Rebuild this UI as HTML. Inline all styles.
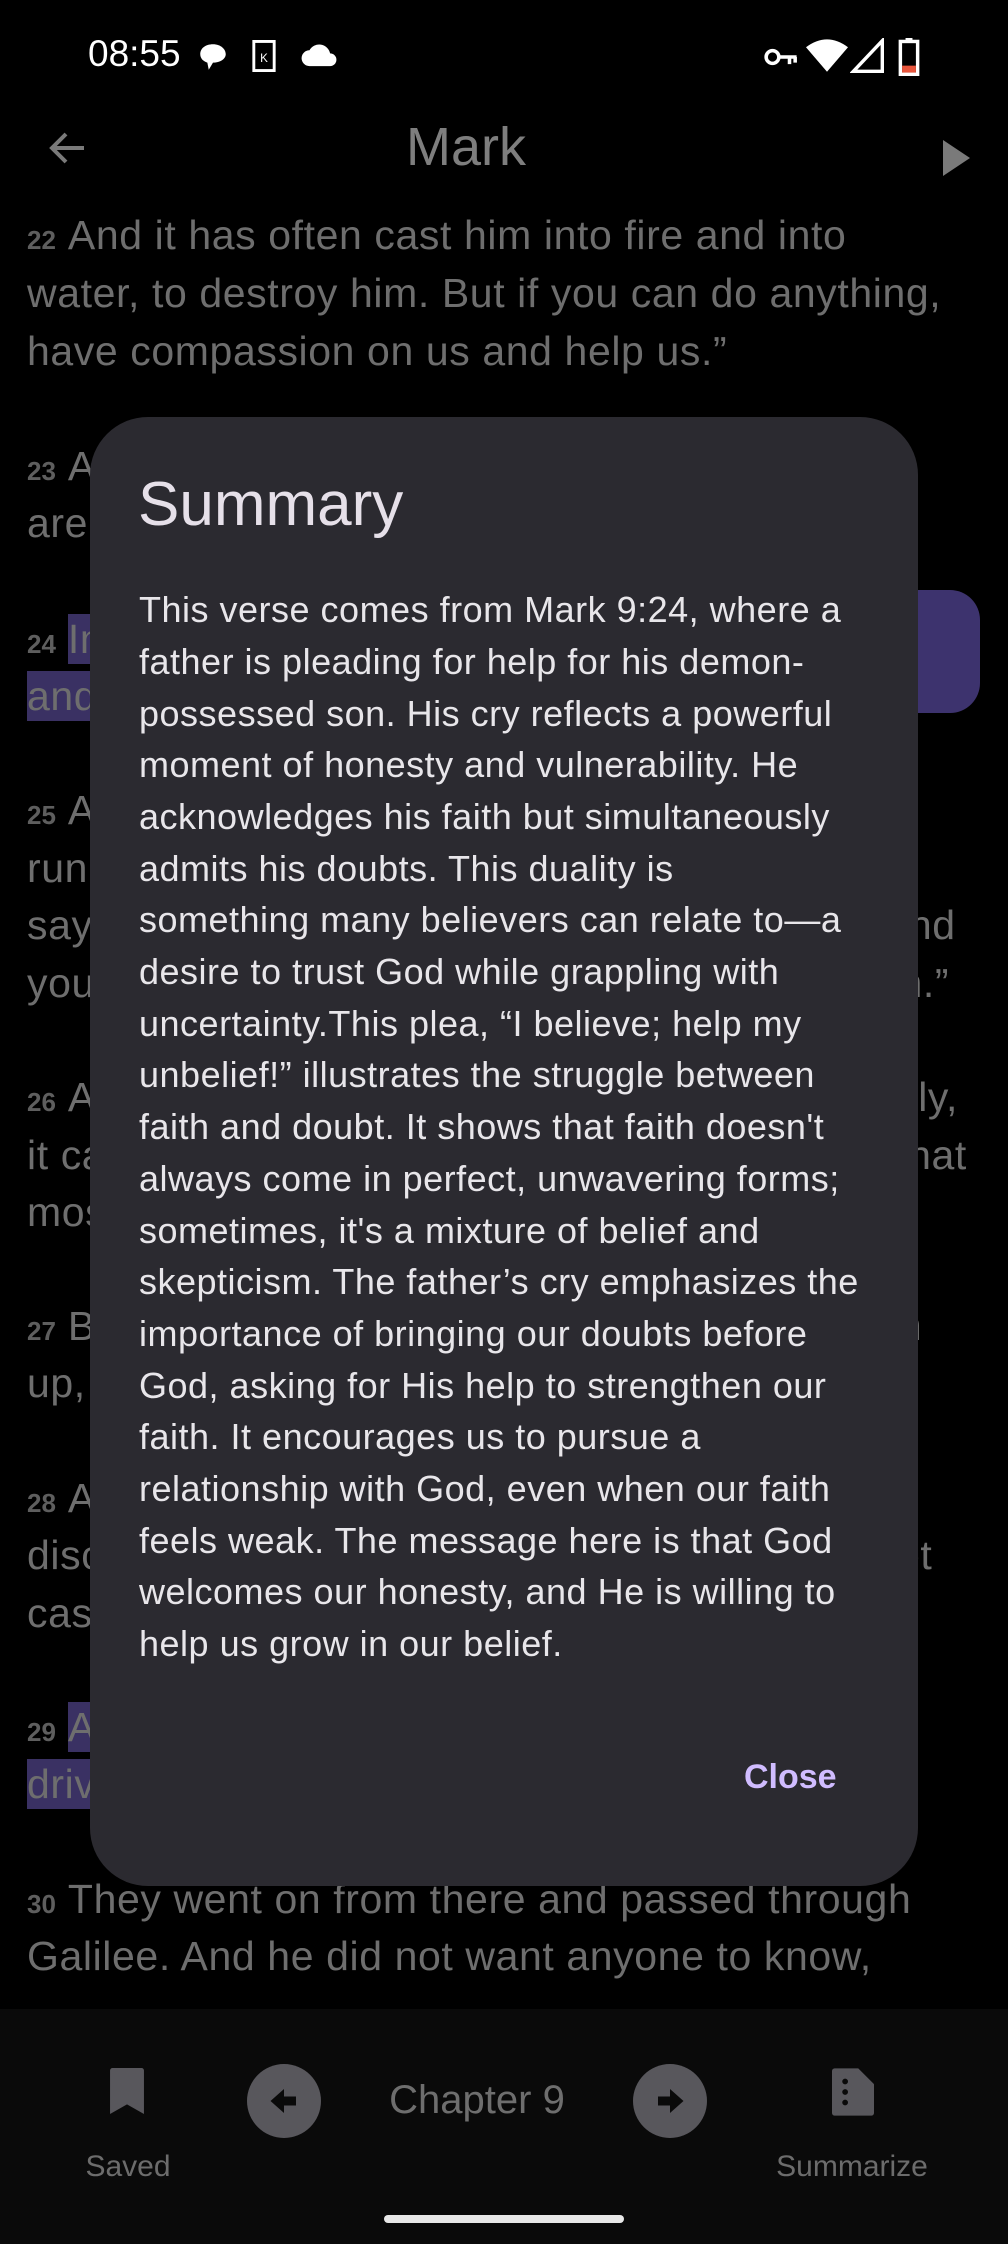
<!DOCTYPE html>
<html><head><meta charset="utf-8"><style>
*{margin:0;padding:0;box-sizing:border-box}
body{width:1008px;height:2244px;background:#000;position:relative;overflow:hidden;font-family:"Liberation Sans",sans-serif}
.a{position:absolute;white-space:nowrap}
.v{position:absolute;left:27px;height:58px;line-height:58px;font-size:41px;letter-spacing:0.6px;color:#6e6e6e;white-space:nowrap}
.n{font-size:26px;font-weight:bold;color:#5e5e5e;margin-right:12px;letter-spacing:0}
.hl{background:#3a3163;padding:2px 0}
.b{position:absolute;left:139px;height:52px;line-height:52px;font-size:36px;letter-spacing:0.5px;color:#e8e6ea;white-space:nowrap}
</style></head><body>
<!-- status bar -->
<div class="a" style="left:88px;top:33px;font-size:37px;color:#fff">08:55</div>
<svg class="a" style="left:196px;top:40px" width="34" height="34" viewBox="0 0 24 24"><path d="M12 3C6.5 3 3 6 3 10c0 3 2 5 5 6l1 5 3-5c5 0 9-2.5 9-6S17.5 3 12 3z" fill="#fff"/></svg>
<svg class="a" style="left:252px;top:40px" width="24" height="32" viewBox="0 0 16 22"><rect x="1" y="1" width="14" height="20" fill="none" stroke="#fff" stroke-width="2"/><text x="8" y="15" font-size="8" fill="#fff" text-anchor="middle" font-family="Liberation Sans">K</text></svg>
<svg class="a" style="left:300px;top:42px" width="38" height="26" viewBox="0 0 24 16"><path d="M6 15a5 5 0 0 1 0-10 7 7 0 0 1 13 2 4 4 0 0 1 0 8z" fill="#fff"/></svg>
<svg class="a" style="left:764px;top:46px" width="34" height="22" viewBox="0 0 24 14"><circle cx="6" cy="7" r="4.5" fill="none" stroke="#fff" stroke-width="2.5"/><path d="M10 7h13M18 7v5M22 7v4" stroke="#fff" stroke-width="2.5"/></svg>
<svg class="a" style="left:806px;top:38px" width="42" height="36" viewBox="0 0 24 20"><path d="M12 19L0 5Q12-4 24 5z" fill="#fff"/></svg>
<svg class="a" style="left:850px;top:38px" width="34" height="36" viewBox="0 0 20 20"><path d="M2 19L19 1v18z" fill="none" stroke="#fff" stroke-width="2"/></svg>
<svg class="a" style="left:898px;top:38px" width="22" height="38" viewBox="0 0 12 22"><rect x="4" y="0" width="4" height="2" fill="#fff"/><rect x="1" y="2" width="10" height="19" fill="none" stroke="#fff" stroke-width="2"/><rect x="2" y="16" width="8" height="4" fill="#e8553c"/></svg>
<!-- app bar -->
<svg class="a" style="left:44px;top:124px" width="48" height="48" viewBox="0 0 24 24"><path d="M20 12H4M11 5l-7 7 7 7" fill="none" stroke="#7a7a7a" stroke-width="2"/></svg>
<div class="a" style="left:0;width:932px;text-align:center;top:116px;font-size:54px;color:#7e7e7e">Mark</div>
<svg class="a" style="left:940px;top:140px" width="30" height="36" viewBox="0 0 10 12"><path d="M1 0l9 6-9 6z" fill="#7a7a7a"/></svg>
<!-- verses -->
<div class="v" style="top:206px"><span class="n">22</span>And it has often cast him into fire and into</div>
<div class="v" style="top:264px">water, to destroy him. But if you can do anything,</div>
<div class="v" style="top:322px">have compassion on us and help us.”</div>
<div class="v" style="top:437px"><span class="n">23</span>And Jesus said to him, “‘If you can’! All things</div>
<div class="v" style="top:494px">are possible for one who believes.”</div>
<div class="v" style="top:610px"><span class="n">24</span><span class="hl">Immediately the father of the child cried out</span></div>
<div class="v" style="top:667px"><span class="hl">and said, “I believe; help my unbelief!”</span></div>
<div class="a" style="left:880px;top:590px;width:100px;height:123px;border-radius:30px;background:#3d336e"></div>
<div class="v" style="top:781px"><span class="n">25</span>And when Jesus saw that a crowd came</div>
<div class="v" style="top:839px">running together, he rebuked the unclean spirit,</div>
<div class="v" style="top:896px">saying to it, “You mute and deaf spirit, I command</div>
<div class="v" style="top:954px">you, come out of him and never enter him again.”</div>
<div class="v" style="top:1068px"><span class="n">26</span>And after crying out and convulsing him terribly,</div>
<div class="v" style="top:1126px">it came out, and the boy was like a corpse, so that</div>
<div class="v" style="top:1183px">most of them said, “He is dead.”</div>
<div class="v" style="top:1297px"><span class="n">27</span>But Jesus took him by the hand and lifted him</div>
<div class="v" style="top:1354px">up, and he arose.</div>
<div class="v" style="top:1469px"><span class="n">28</span>And when he had entered the house, his</div>
<div class="v" style="top:1526px">disciples asked him privately, “Why could we not</div>
<div class="v" style="top:1584px">cast it out?”</div>
<div class="v" style="top:1698px"><span class="n">29</span><span class="hl">And he said to them, “This kind cannot be</span></div>
<div class="v" style="top:1755px"><span class="hl">driven out by anything but prayer.”</span></div>
<div class="v" style="top:1870px"><span class="n">30</span>They went on from there and passed through</div>
<div class="v" style="top:1927px">Galilee. And he did not want anyone to know,</div>
<!-- bottom bar -->
<div class="a" style="left:0;top:2009px;width:1008px;height:235px;background:#0a0a0a"></div>
<svg class="a" style="left:110px;top:2068px" width="34" height="46" viewBox="0 0 14 19"><path d="M0 1a1 1 0 0 1 1-1h12a1 1 0 0 1 1 1v18l-7-4-7 4z" fill="#58575c"/></svg>
<div class="a" style="left:0;width:256px;text-align:center;top:2150px;font-size:30px;color:#6c6c6c">Saved</div>
<div class="a" style="left:247px;top:2064px;width:74px;height:74px;border-radius:50%;background:#58575c"></div>
<svg class="a" style="left:266px;top:2083px" width="36" height="36" viewBox="0 0 24 24"><path d="M3 12l9-8v5h8v6h-8v5z" fill="#0a0a0a"/></svg>
<div class="a" style="left:340px;width:274px;text-align:center;top:2078px;font-size:40px;color:#6e6e6e">Chapter 9</div>
<div class="a" style="left:633px;top:2064px;width:74px;height:74px;border-radius:50%;background:#58575c"></div>
<svg class="a" style="left:652px;top:2083px" width="36" height="36" viewBox="0 0 24 24"><path d="M21 12l-9-8v5H4v6h8v5z" fill="#0a0a0a"/></svg>
<svg class="a" style="left:832px;top:2068px" width="42" height="48" viewBox="0 0 16 18"><path d="M1 0h9l6 6v11a1 1 0 0 1-1 1H1a1 1 0 0 1-1-1V1a1 1 0 0 1 1-1z" fill="#58575c"/><circle cx="5" cy="5" r="1.1" fill="#0a0a0a"/><circle cx="5" cy="9" r="1.1" fill="#0a0a0a"/><circle cx="5" cy="13" r="1.1" fill="#0a0a0a"/></svg>
<div class="a" style="left:752px;width:200px;text-align:center;top:2150px;font-size:30px;color:#6c6c6c">Summarize</div>
<div class="a" style="left:384px;top:2215px;width:240px;height:8px;border-radius:4px;background:#e8e8e8"></div>
<!-- dialog -->
<div class="a" style="left:90px;top:417px;width:828px;height:1469px;border-radius:58px;background:#2b2a30"></div>
<div class="a" style="left:138px;top:469px;font-size:62px;color:#e6e0e9">Summary</div>
<div class="b" style="top:584px">This verse comes from Mark 9:24, where a</div>
<div class="b" style="top:636px">father is pleading for help for his demon-</div>
<div class="b" style="top:688px">possessed son. His cry reflects a powerful</div>
<div class="b" style="top:739px">moment of honesty and vulnerability. He</div>
<div class="b" style="top:791px">acknowledges his faith but simultaneously</div>
<div class="b" style="top:843px">admits his doubts. This duality is</div>
<div class="b" style="top:894px">something many believers can relate to—a</div>
<div class="b" style="top:946px">desire to trust God while grappling with</div>
<div class="b" style="top:998px">uncertainty.This plea, “I believe; help my</div>
<div class="b" style="top:1049px">unbelief!” illustrates the struggle between</div>
<div class="b" style="top:1101px">faith and doubt. It shows that faith doesn't</div>
<div class="b" style="top:1153px">always come in perfect, unwavering forms;</div>
<div class="b" style="top:1205px">sometimes, it's a mixture of belief and</div>
<div class="b" style="top:1256px">skepticism. The father’s cry emphasizes the</div>
<div class="b" style="top:1308px">importance of bringing our doubts before</div>
<div class="b" style="top:1360px">God, asking for His help to strengthen our</div>
<div class="b" style="top:1411px">faith. It encourages us to pursue a</div>
<div class="b" style="top:1463px">relationship with God, even when our faith</div>
<div class="b" style="top:1515px">feels weak. The message here is that God</div>
<div class="b" style="top:1566px">welcomes our honesty, and He is willing to</div>
<div class="b" style="top:1618px">help us grow in our belief.</div>
<div class="a" style="left:744px;top:1758px;font-size:34px;font-weight:bold;color:#d0bcff">Close</div>
</body></html>
